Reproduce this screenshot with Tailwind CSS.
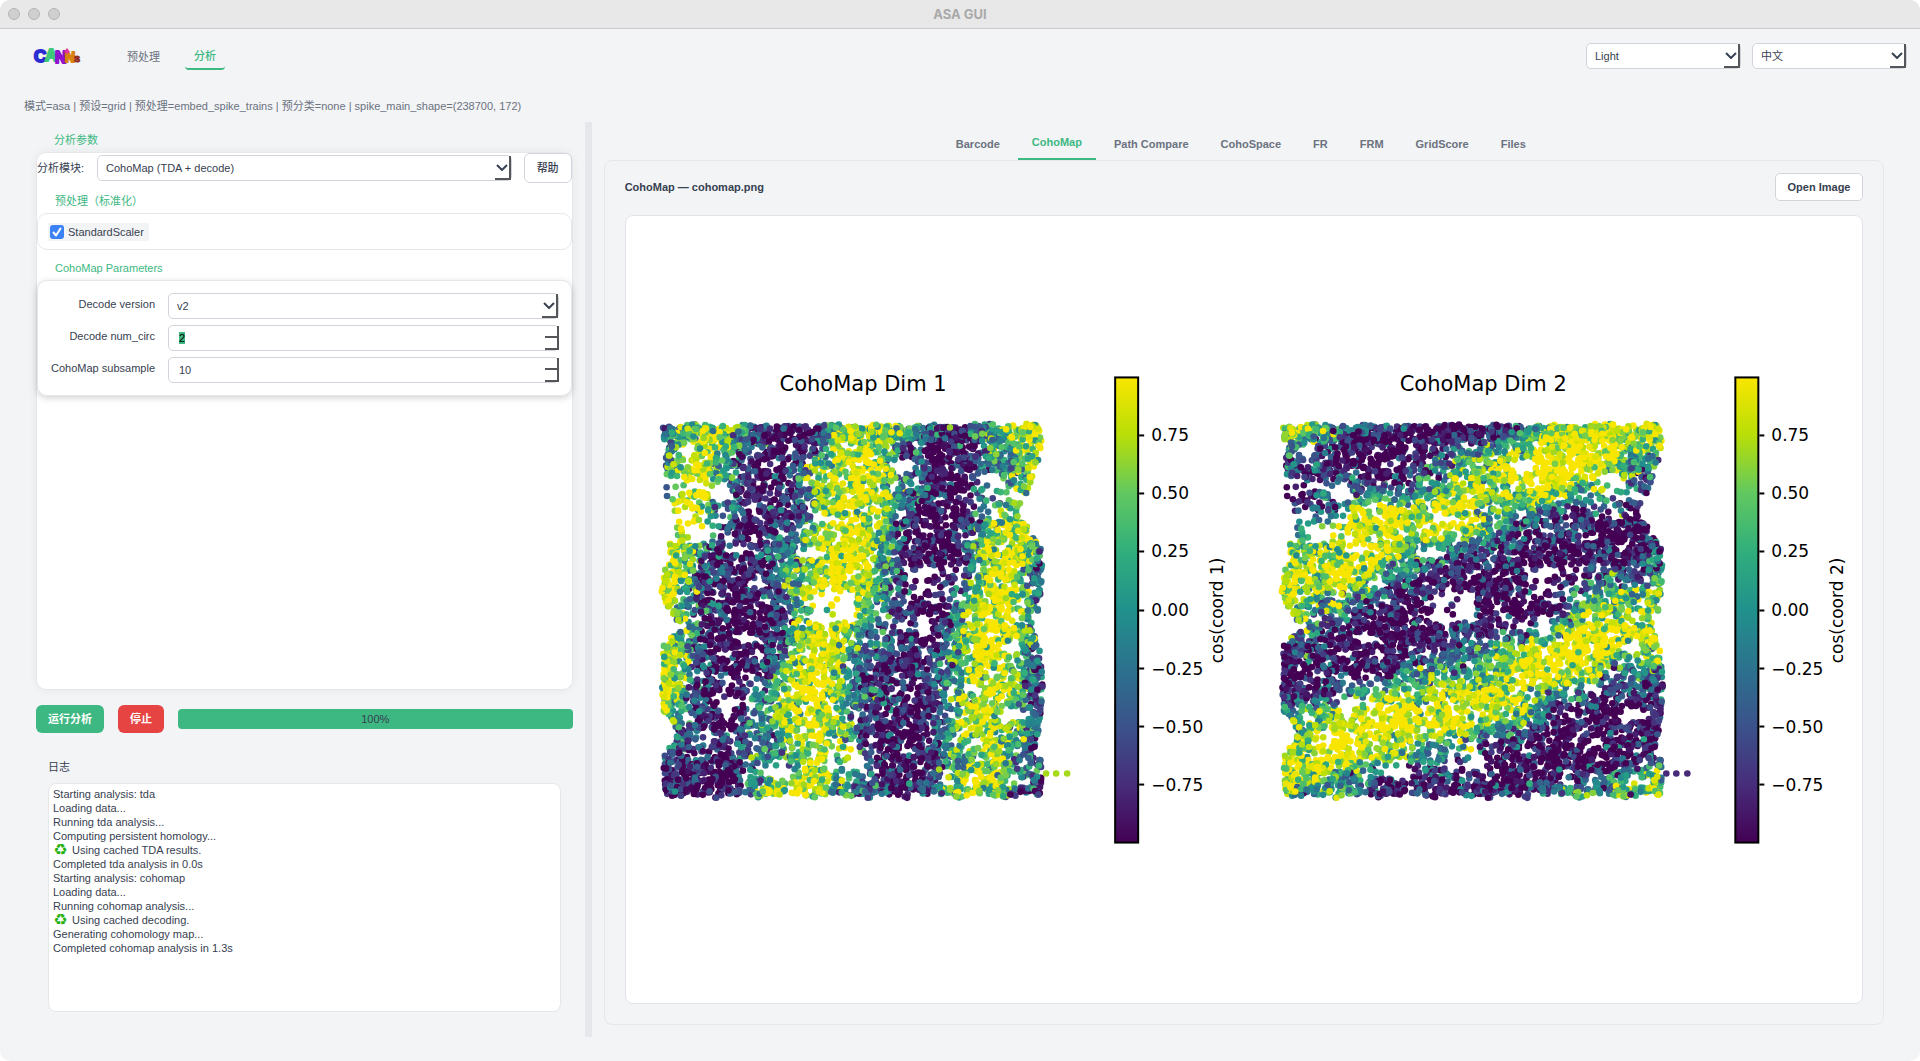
<!DOCTYPE html>
<html lang="zh-CN">
<head>
    <meta charset="UTF-8">
    <meta name="viewport" content="width=device-width, initial-scale=1.0">
    <title>ASA GUI</title>
    <script src="https://cdn.jsdelivr.net/npm/@tailwindcss/browser@4"></script>
</head>
<body class="bg-white font-['Liberation_Sans','Noto_Sans_CJK_SC',sans-serif] text-[11px] leading-4 text-[#374151]">
<div class="flex min-h-screen flex-col overflow-hidden rounded-[10px] bg-[#f3f4f6]">

    <!-- Title bar -->
    <div class="grid h-[29px] shrink-0 grid-cols-3 items-center border-b border-[#cbcbce] bg-[#e8e8e8] px-2">
        <div class="flex gap-2">
            <span class="size-3 rounded-full border border-[#b5b5b5] bg-[#cfcfcf]"></span>
            <span class="size-3 rounded-full border border-[#b5b5b5] bg-[#cfcfcf]"></span>
            <span class="size-3 rounded-full border border-[#b5b5b5] bg-[#cfcfcf]"></span>
        </div>
        <h1 class="text-center font-[Inter,sans-serif] text-[13px] font-bold text-[#a9a9a9]">ASA GUI</h1>
    </div>

    <!-- Header -->
    <header class="flex h-[54px] shrink-0 items-center pr-[13px] pl-[33px]">
        <svg class="h-5 w-12" viewBox="0 0 48 20" aria-label="CANNs" font-family="Liberation Sans" font-weight="bold" stroke-width="2" stroke-linejoin="round">
            <text x="1" y="16" font-size="17" fill="#3a5fe0" stroke="#2a2ad2">C</text>
            <text x="12" y="15" font-size="17" fill="#5fe08f" stroke="#3cc878">A</text>
            <text x="22" y="17" font-size="16" fill="#b02be0" stroke="#8f12cc">N</text>
            <text x="32" y="16" font-size="14" fill="#f0a020" stroke="#d98212">N</text>
            <text x="41" y="16" font-size="11" fill="#b5442a" stroke="#8c2a1c" stroke-width="1">s</text>
            <path d="M31 6l3-4 3 4-3 2z" fill="#e0359a"/>
        </svg>
        <nav class="ml-10 flex items-start gap-3">
            <a href="#" class="px-[6px] pt-[6px] pb-[5px] text-[#6b7280]">预处理</a>
            <a href="#" class="ml-[7px] h-[27px] rounded-b-[4px] border-b-2 border-[#3db882] px-[9px] pt-[5px] font-medium text-[#3db882]">分析</a>
        </nav>
        <div class="ml-auto flex gap-[11px]">
            <div class="relative">
                <select aria-label="Theme" class="h-[26px] w-[155px] appearance-none rounded-[5px] border border-[#d1d5db] bg-white px-2"><option>Light</option></select>
                <span class="pointer-events-none absolute inset-y-px right-px flex w-4 items-center justify-center border-r-2 border-b-2 border-[#55565a]"><svg class="h-[7px] w-3" viewBox="0 0 12 7" fill="none" stroke="#374151" stroke-width="2"><path d="M1 1l5 5 5-5"/></svg></span>
            </div>
            <div class="relative">
                <select aria-label="Language" class="h-[26px] w-[155px] appearance-none rounded-[5px] border border-[#d1d5db] bg-white px-2"><option>中文</option></select>
                <span class="pointer-events-none absolute inset-y-px right-px flex w-4 items-center justify-center border-r-2 border-b-2 border-[#55565a]"><svg class="h-[7px] w-3" viewBox="0 0 12 7" fill="none" stroke="#374151" stroke-width="2"><path d="M1 1l5 5 5-5"/></svg></span>
            </div>
        </div>
    </header>

    <p class="flex h-[39px] shrink-0 items-center pt-[6px] pl-6 whitespace-pre text-[#6b7280]">模式=asa | 预设=grid | 预处理=embed_spike_trains | 预分类=none | spike_main_shape=(238700, 172)</p>

    <main class="mb-6 flex flex-1">
        <!-- Parameters and log -->
        <section class="flex w-[30.45%] shrink-0 flex-col pr-3 pb-[25px] pl-9">
            <h2 class="flex h-[30px] items-center pt-[5px] pl-[18px] text-[#3db882]">分析参数</h2>
            <div class="flex-1 rounded-[10px] border border-[#e5e7eb] bg-white shadow-[0_0_10px_rgba(0,0,0,0.06)]">
                <div class="flex h-[30px] items-center">
                    <label for="module" class="w-[60px]">分析模块:</label>
                    <div class="relative flex-1">
                        <select id="module" class="h-[26px] w-full appearance-none rounded-[5px] border border-[#d1d5db] bg-white px-2"><option>CohoMap (TDA + decode)</option></select>
                        <span class="pointer-events-none absolute inset-y-px right-px flex w-4 items-center justify-center border-r-2 border-b-2 border-[#55565a]"><svg class="h-[7px] w-3" viewBox="0 0 12 7" fill="none" stroke="#374151" stroke-width="2"><path d="M1 1l5 5 5-5"/></svg></span>
                    </div>
                    <button class="ml-3 h-[30px] w-12 rounded-[6px] border border-[#d1d5db] bg-white font-medium">帮助</button>
                </div>
                <h3 class="flex h-[30px] items-center pt-[5px] pl-[18px] text-[#3db882]">预处理（标准化）</h3>
                <div class="flex h-[37px] items-center rounded-[10px] border border-[#e5e7eb] px-[10px]">
                    <label class="flex h-[18px] items-center gap-1 bg-[#f3f4f6] pr-[5px] pl-[2px]">
                        <span class="relative flex size-[14px]">
                            <input type="checkbox" checked class="size-[14px] appearance-none rounded-[3px] bg-[#3b82f6]">
                            <svg class="pointer-events-none absolute inset-0" viewBox="0 0 14 14" fill="none" stroke="#fff" stroke-width="2" stroke-linecap="round" stroke-linejoin="round"><path d="M3.500 7.500l2.500 3 4.500-7"/></svg>
                        </span>
                        StandardScaler
                    </label>
                </div>
                <h3 class="flex h-[30px] items-center pt-[5px] pl-[18px] text-[#3db882]">CohoMap Parameters</h3>
                <div class="grid grid-cols-[117px_1fr] items-center gap-x-[13px] gap-y-[6px] rounded-[10px] border border-[#e5e7eb] bg-white py-3 pr-3 shadow-[0_2px_7px_rgba(0,0,0,0.18)]">
                    <label for="version" class="pb-1 text-right">Decode version</label>
                    <div class="relative">
                        <select id="version" class="h-[26px] w-full appearance-none rounded-[5px] border border-[#d1d5db] bg-white px-2"><option>v2</option></select>
                        <span class="pointer-events-none absolute inset-y-px right-px flex w-4 items-center justify-center border-r-2 border-b-2 border-[#55565a]"><svg class="h-[7px] w-3" viewBox="0 0 12 7" fill="none" stroke="#374151" stroke-width="2"><path d="M1 1l5 5 5-5"/></svg></span>
                    </div>
                    <label for="numCirc" class="pb-1 text-right">Decode num_circ</label>
                    <div class="relative">
                        <input id="numCirc" type="text" inputmode="numeric" value="2" class="block h-[26px] w-full rounded-[5px] border border-[#d1d5db] bg-white px-[10px] outline-none selection:bg-[#3db882] selection:text-black">
                        <span class="pointer-events-none absolute inset-y-px right-0 grid w-[14px] grid-rows-2 border-r-2 border-[#55565a]"><i class="border-b-2 border-[#55565a]"></i><i class="border-b-2 border-[#55565a]"></i></span>
                    </div>
                    <label for="subsample" class="pb-1 text-right">CohoMap subsample</label>
                    <div class="relative">
                        <input id="subsample" type="text" inputmode="numeric" value="10" class="block h-[26px] w-full rounded-[5px] border border-[#d1d5db] bg-white px-[10px] outline-none">
                        <span class="pointer-events-none absolute inset-y-px right-0 grid w-[14px] grid-rows-2 border-r-2 border-[#55565a]"><i class="border-b-2 border-[#55565a]"></i><i class="border-b-2 border-[#55565a]"></i></span>
                    </div>
                </div>
            </div>

            <div class="mt-[15px] flex items-center gap-[14px]">
                <button class="h-7 w-[68px] rounded-[6px] bg-[#3db882] font-bold text-white">运行分析</button>
                <button class="h-7 w-[46px] rounded-[6px] bg-[#e64343] font-bold text-white">停止</button>
                <div role="progressbar" aria-valuenow="100" class="flex h-5 flex-1 items-center justify-center rounded-[4px] bg-[#3db882]">100%</div>
            </div>

            <h2 class="mt-[26px] mb-2 h-4 pl-3">日志</h2>
            <div role="log" class="mx-3 h-[229px] rounded-[8px] border border-[#e5e7eb] bg-white px-1 py-[3px] leading-[14px]">
                <p>Starting analysis: tda</p>
                <p>Loading data...</p>
                <p>Running tda analysis...</p>
                <p>Computing persistent homology...</p>
                <p class="flex items-center gap-1"><span class="w-[15px] text-center font-['DejaVu_Sans'] text-[16px] text-[#27b012]">♻</span>Using cached TDA results.</p>
                <p>Completed tda analysis in 0.0s</p>
                <p>Starting analysis: cohomap</p>
                <p>Loading data...</p>
                <p>Running cohomap analysis...</p>
                <p class="flex items-center gap-1"><span class="w-[15px] text-center font-['DejaVu_Sans'] text-[16px] text-[#27b012]">♻</span>Using cached decoding.</p>
                <p>Generating cohomology map...</p>
                <p>Completed cohomap analysis in 1.3s</p>
            </div>
        </section>

        <div class="w-[7px] shrink-0 bg-[#e5e7eb]"></div>

        <!-- Results -->
        <section class="flex min-w-0 flex-1 flex-col pr-9 pb-3 pl-3">
            <div role="tablist" class="flex h-[38px] justify-center pr-[6px] font-bold text-[#6b7280]">
                <button role="tab" class="px-4 pt-[6px]">Barcode</button>
                <button role="tab" aria-selected="true" class="mx-[2px] border-b-2 border-[#3db882] px-[14px] pt-[4px] text-[#3db882]">CohoMap</button>
                <button role="tab" class="px-4 pt-[6px]">Path Compare</button>
                <button role="tab" class="px-4 pt-[6px]">CohoSpace</button>
                <button role="tab" class="px-4 pt-[6px]">FR</button>
                <button role="tab" class="px-4 pt-[6px]">FRM</button>
                <button role="tab" class="px-4 pt-[6px]">GridScore</button>
                <button role="tab" class="px-4 pt-[6px]">Files</button>
            </div>
            <div class="flex flex-1 flex-col rounded-[8px] border border-[#e5e7eb] px-5 pt-3 pb-5">
                <div class="flex items-center justify-between">
                    <h2 class="font-bold">CohoMap — cohomap.png</h2>
                    <button class="h-7 w-[88px] rounded-[5px] border border-[#d1d5db] bg-white font-bold">Open Image</button>
                </div>
                <div class="mt-[14px] flex min-h-0 flex-1 rounded-[8px] border border-[#e2e4e9] bg-white">
                    <svg id="figure" class="h-full w-full" viewBox="0 0 1236 786" font-family="DejaVu Sans" fill="#000">
                        <defs>
                            <linearGradient id="viridis" x1="0" y1="1" x2="0" y2="0"></linearGradient>
                        </defs>
                    </svg>
                </div>
            </div>
        </section>
    </main>
</div>

<script>
    // Colour levels (0 = -1, 9 = +1) of each map, one digit per 50x50 cell
    const dim1 = [
        "35776310126877643134688", "58875220018887421013578", "57873200368896320014367", "48854201588897431014568",
        "58863101368898522014566", "69842101358997410015677", "88732013468975300026887", "88521123578985210037994",
        "97321024579984101027983", "86310124689875200148973", "95210024789864200168983", "85310002689864310369984",
        "76310013788743211479985", "85210023798533201479974", "86200025898422112479862", "86211136998422113578863",
        "85210347997432102478862", "73210357887421003579762", "43211446886521003578663", "33202445897521013578743",
        "22101445686541002578743", "12000367885432003688742", "11001488875431015578532"
    ];
    const dim2 = [
        "87642321010011248788888", "65310000013345789999878", "32210000145668899998554", "21123101537778999988742",
        "00244542668888797556422", "12346898898966543223211", "35479998889853322210000", "67688886554332111100011",
        "87889865432121000012013", "88899642211000000034425", "87685321110000100356666", "86442110000100001477777",
        "75321000003212236898989", "22210000122335678999888", "11100002344467899997466", "00120125566578998884332",
        "12237577678898864331122", "45678899889887752110001", "56799999888764421000100", "67898987665422110001012",
        "89998666432110000120023", "88644222121110001123556", "72564201101211126556678"
    ];
    // Places the animal never visited: cx, cy, rx, ry
    const holes = [
        [95, 100, 15, 18], [80, 295, 8, 22], [120, 205, 18, 10], [125, 345, 36, 10], [735, 150, 24, 22], [1000, 185, 38, 16],
        [570, 90, 10, 10], [1075, 235, 18, 14], [485, 310, 15, 12], [540, 315, 18, 6], [742, 292, 14, 14], [815, 468, 40, 8],
        [800, 505, 30, 6], [470, 412, 36, 12], [240, 400, 36, 10], [570, 550, 20, 28], [500, 604, 32, 12], [300, 500, 18, 10],
        [325, 548, 18, 8], [285, 665, 28, 10], [200, 712, 16, 8], [215, 865, 28, 12], [155, 950, 12, 22], [370, 1068, 46, 18],
        [450, 712, 10, 14], [1160, 615, 30, 28], [1062, 695, 20, 12], [1080, 895, 46, 12], [945, 812, 18, 12], [590, 1050, 32, 10],
        [960, 970, 16, 10], [748, 1000, 16, 8], [800, 635, 18, 12], [808, 712, 8, 8], [115, 610, 12, 8], [1072, 1082, 15, 13],
        [125, 1020, 16, 6], [710, 220, 12, 8], [600, 910, 5, 12], [1135, 710, 14, 8], [60, 635, 30, 8], [215, 785, 16, 8]
    ];
    // Less travelled areas: x, y, width, height
    const sparse = [[30, 185, 200, 190], [930, 170, 190, 140], [740, 450, 180, 110], [430, 520, 170, 110], [260, 1030, 180, 60],
        [520, 960, 140, 110], [190, 830, 100, 80], [720, 600, 110, 60], [180, 760, 140, 60]];
    // Outline of the arena: y, left, right
    const edge = [[15, 22, 1140], [70, 20, 1158], [130, 28, 1146], [200, 30, 1122], [250, 34, 1105], [310, 66, 1098], [350, 50, 1130],
        [400, 36, 1155], [480, 24, 1162], [525, 14, 1158], [580, 40, 1150], [640, 64, 1128], [690, 22, 1150], [800, 18, 1160],
        [880, 20, 1156], [930, 56, 1150], [980, 60, 1138], [1000, 26, 1150], [1080, 22, 1158], [1145, 30, 1158]];
    const stops = ["#440154", "#472d7b", "#3b528b", "#2c728e", "#21918c", "#30ae7c", "#60c860", "#b8de08", "#f9e600"];

    let seed = 7;
    function random() {
        seed = (seed * 1664525 + 1013904223) % 4294967296;
        return seed / 4294967296;
    }

    function colour(v) {
        const t = Math.max(0, Math.min(0.999, v)) * 8;
        const i = Math.floor(t);
        const part = (s, k) => parseInt(s.slice(1 + k * 2, 3 + k * 2), 16);
        const rgb = [0, 1, 2].map(k => Math.round(part(stops[i], k) + (part(stops[i + 1], k) - part(stops[i], k)) * (t - i)));
        return `rgb(${rgb})`;
    }

    function edges(y) {
        let i = 0;
        while (i < edge.length - 2 && edge[i + 1][0] < y) i++;
        const [a, b] = [edge[i], edge[i + 1]];
        const t = (y - a[0]) / (b[0] - a[0]);
        return [a[1] + (b[1] - a[1]) * t, a[2] + (b[2] - a[2]) * t];
    }

    function level(map, x, y) {
        const gx = Math.max(0, Math.min(22, (x - 35) / 50)), gy = Math.max(0, Math.min(22, (y - 35) / 50));
        const x0 = Math.floor(gx), y0 = Math.floor(gy), x1 = Math.min(22, x0 + 1), y1 = Math.min(22, y0 + 1);
        const top = +map[y0][x0] * (1 - gx + x0) + +map[y0][x1] * (gx - x0);
        const low = +map[y1][x0] * (1 - gx + x0) + +map[y1][x1] * (gx - x0);
        return (top * (1 - gy + y0) + low * (gy - y0)) / 9;
    }

    const points = [];
    while (points.length < 8800) {
        let x = 14 + random() * 1148, y = 22 + random() * 1122;
        const side = random();
        if (side < 0.05) y = 24 + random() * 50;
        else if (side < 0.06) y = 1110 + random() * 34;
        const [left, right] = edges(y);
        if (side > 0.985) x = right - random() * 40;
        else if (side > 0.975) x = left + random() * 30;
        // ragged top and bottom
        const wave = 5 * Math.sin(x / 23) + 4 * Math.sin(x / 9);
        if (x < left || x > right || y < 26 + wave || y > 1138 + wave) continue;
        if (holes.some(h => ((x - h[0]) / (h[2] + 4)) ** 2 + ((y - h[1]) / (h[3] + 4)) ** 2 < 1) && random() < 0.985) continue;
        if (sparse.some(s => x > s[0] && x < s[0] + s[2] && y > s[1] && y < s[1] + s[3]) && random() < 0.6) continue;
        const noise = (random() + random() + random() - 1.5) * 0.42;
        const stray = random() < 0.05 ? random() - 0.5 : 0;
        points.push([x / 3, y / 3, noise + stray]);
    }

    function plot(map, n, tail) {
        let out = `<g transform="translate(${30 + (n - 1) * 620} 200)">`;
        out += `<text x="207" y="-25" font-size="21" text-anchor="middle">CohoMap Dim ${n}</text>`;
        for (const [x, y, noise] of points) {
            const v = level(map, x * 3, y * 3);
            const c = v + noise + (v - 0.5) * 0.12;
            out += `<circle cx="${x.toFixed(1)}" cy="${y.toFixed(1)}" r="3.3" fill="${colour(c)}"/>`;
        }
        for (const x of [390, 400, 411]) out += `<circle cx="${x}" cy="357" r="3.3" fill="${colour(tail)}"/>`;
        out += `<rect x="459" y="-39" width="23" height="465" fill="url(#viridis)" stroke="#000" stroke-width="2"/>`;
        ["0.75", "0.50", "0.25", "0.00", "−0.25", "−0.50", "−0.75"].forEach((label, i) => {
            const y = Math.round(19 + i * 58.2);
            out += `<path d="M483 ${y}h5" stroke="#000" stroke-width="2"/><text x="495" y="${y + 6}" font-size="17">${label}</text>`;
        });
        out += `<text transform="translate(567 194) rotate(-90)" font-size="17" text-anchor="middle">cos(coord ${n})</text></g>`;
        return out;
    }

    document.getElementById("viridis").innerHTML = stops.map((s, i) => `<stop offset="${i / 8}" stop-color="${s}"/>`).join("");
    document.getElementById("figure").insertAdjacentHTML("beforeend", plot(dim1, 1, 0.85) + plot(dim2, 2, 0.12));

    document.getElementById("numCirc").select();
</script>
</body>
</html>
